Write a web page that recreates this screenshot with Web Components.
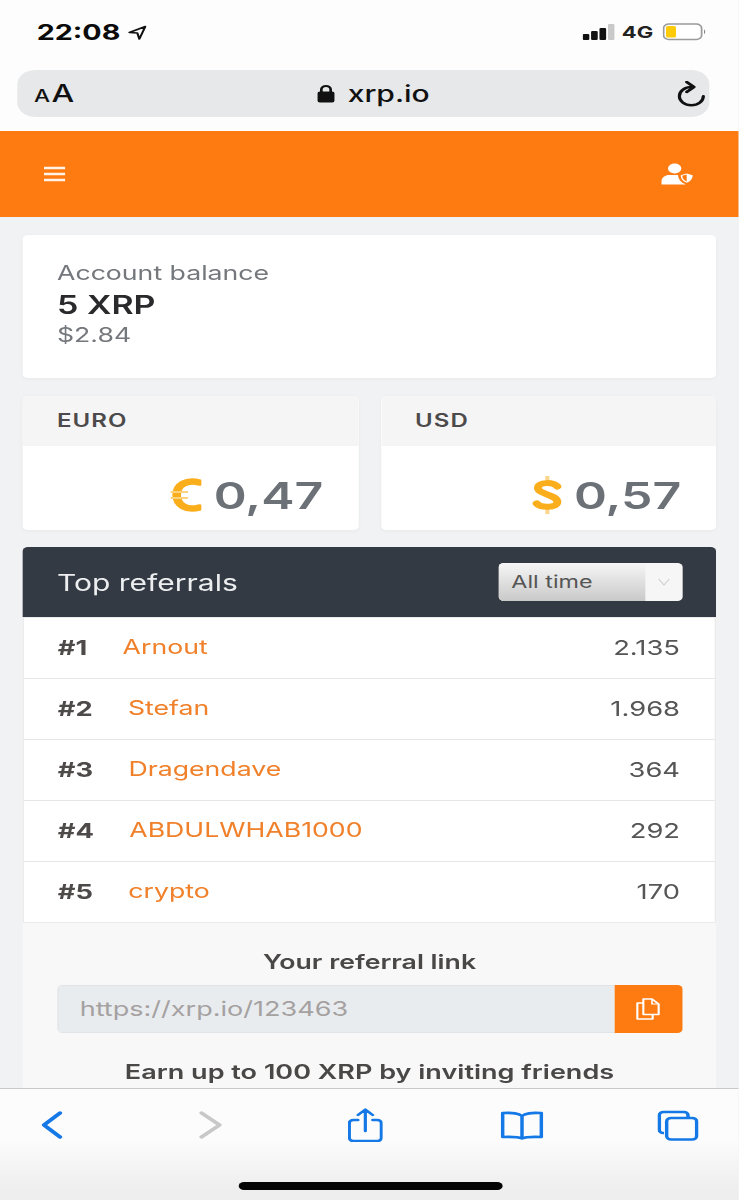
<!DOCTYPE html>
<html lang="en">
<head>
<meta charset="utf-8">
<title>xrp.io</title>
<style>
	html, body { margin: 0; height: 1200px; overflow: hidden; background: #f1f2f3; }
	body { font-family: Inter, "Liberation Sans", sans-serif; }
</style>
</head>
<body>
<phone-screen>
	<status-bar slot="top"></status-bar>
	<url-bar slot="top"></url-bar>
	<site-header slot="top"></site-header>

	<balance-card label="Account balance" amount="5 XRP" fiat="$2.84"></balance-card>
	<div class="currencies" style="display:flex;gap:17.25px;margin-top:18px">
		<currency-card label="EURO" value="0,47">
			<svg slot="icon" width="24" height="36" viewBox="0 0 24 36"><path d="M22.500 5.500C13 2 5.500 8 5.500 18S13 34 22.500 30.500" fill="none" stroke="#fbae1c" stroke-width="6.500" stroke-linecap="round"/><path d="M1 15h13M1 21h13" stroke="#fbd27e" stroke-width="2"/></svg>
		</currency-card>
		<currency-card label="USD" value="0,57">
			<svg slot="icon" width="23" height="40" viewBox="0 0 23 40"><path d="M11.500 1v5M11.500 34v5" stroke="#fcd48a" stroke-width="3"/><path d="M19 11.500C16 7 4.500 6.500 4.500 13c0 6.500 14.500 6.500 14.500 14 0 6-12.500 6-15.500 1.500" fill="none" stroke="#fbae1c" stroke-width="6" stroke-linecap="round"/></svg>
		</currency-card>
	</div>
	<referral-table title="Top referrals" period="All time">
		<referral-row rank="#1" name="Arnout" count="2.135"></referral-row>
		<referral-row rank="#2" name="Stefan" count="1.968"></referral-row>
		<referral-row rank="#3" name="Dragendave" count="364"></referral-row>
		<referral-row rank="#4" name="ABDULWHAB1000" count="292"></referral-row>
		<referral-row rank="#5" name="crypto" count="170"></referral-row>
	</referral-table>
	<referral-link url="https://xrp.io/123463"></referral-link>

	<safari-toolbar slot="bottom"></safari-toolbar>
</phone-screen>

<script>
// the reference is an iphone capture squeezed into 739px, so everything is laid out at 554px and stretched
class PhoneScreen extends HTMLElement {
	constructor(){
		super();
		this.attachShadow({mode:"open"});
		this.shadowRoot.innerHTML = /*html*/`
			<style>
				:host {
					display: flex;
					flex-direction: column;
					width: 554.25px;
					height: 1200px;
					transform: scaleX(1.33333);
					transform-origin: 0 0;
					overflow: hidden;
				}
				main {
					flex: 1;
					min-height: 0;
					overflow: hidden;
					padding: 18px 17.25px 0;
				}
			</style>
			<slot name="top"></slot>
			<main><slot></slot></main>
			<slot name="bottom"></slot>
		`;
	}
}
customElements.define("phone-screen",PhoneScreen);

class StatusBar extends HTMLElement {
	constructor(){
		super();
		this.attachShadow({mode:"open"});
		this.shadowRoot.innerHTML = /*html*/`
			<style>
				:host {
					display: flex;
					align-items: center;
					height: 70px;
					box-sizing: border-box;
					padding: 0 24.3px 6px 27.5px;
					background: #fdfdfd;
					color: #0b0b0b;
				}
				.time { font-size: 21.5px; font-weight: 700; margin-right: 6px; }
				.right { margin-left: auto; display: flex; align-items: center; }
				.net { font-size: 16.5px; font-weight: 700; margin: 0 7px 0 5.5px; color: #222; }
			</style>
			<span class="time">22:08</span>
			<svg width="14" height="15" viewBox="0 0 14 15"><path d="M13 1.500 1 7.500l6 .5 1.500 6z" fill="none" stroke="#111" stroke-width="1.600" stroke-linejoin="round"/></svg>
			<div class="right">
				<svg width="24" height="17" viewBox="0 0 24 17">
					<rect x="0" y="10" width="5" height="6" rx="1" fill="#111"/>
					<rect x="6.300" y="7" width="5" height="9" rx="1" fill="#111"/>
					<rect x="12.600" y="4" width="5" height="12" rx="1" fill="#111"/>
					<rect x="19" y="0" width="5" height="16" rx="1" fill="#c9c9c9"/>
				</svg>
				<span class="net">4G</span>
				<svg width="33" height="18" viewBox="0 0 33 18">
					<rect x=".7" y="1" width="28.500" height="15.500" rx="4" fill="#fff" stroke="#9a9a9a" stroke-width="1.300"/>
					<rect x="2.500" y="3" width="7.500" height="11.500" rx="1.500" fill="#fdcb0a"/>
					<path d="M31 6.500c1.200.5 1.200 4 0 4.500z" fill="#888"/>
				</svg>
			</div>
		`;
	}
}
customElements.define("status-bar",StatusBar);

class UrlBar extends HTMLElement {
	constructor(){
		super();
		this.attachShadow({mode:"open"});
		this.shadowRoot.innerHTML = /*html*/`
			<style>
				:host {
					display: block;
					background: #fdfdfd;
					padding: 0 22px 14px 12.750px;
				}
				.bar {
					position: relative;
					display: flex;
					align-items: center;
					justify-content: space-between;
					height: 47px;
					padding: 0 3px 0 12.750px;
					border-radius: 14px;
					background: #e7e8e9;
					color: #111;
				}
				.aa { font-size: 24px; font-weight: 500; line-height: 1; display: flex; align-items: baseline; }
				.aa small { font-size: 17px; margin-right: 1px; }
				.host {
					position: absolute;
					left: 225px;
					top: 0;
					bottom: 0;
					display: flex;
					align-items: center;
					gap: 10px;
					font-size: 22.5px;
					font-weight: 500;
				}
			</style>
			<div class="bar">
				<span class="aa"><small>A</small>A</span>
				<span class="host">
					<svg width="13" height="19" viewBox="0 0 13 19"><path d="M3 8V5.500a3.500 3.500 0 0 1 7 0V8" fill="none" stroke="#111" stroke-width="2"/><rect x="0" y="7.500" width="13" height="11" rx="2" fill="#111"/></svg>
					xrp.io
				</span>
				<svg width="21" height="26" viewBox="0 0 21 26"><path d="M11 6C5 6 1.500 10.500 1.500 15.300s4 9 9 9 9-4 9-9" fill="none" stroke="#111" stroke-width="2.400" stroke-linecap="round"/><path d="M7 1l5.500 5-5.500 5" fill="none" stroke="#111" stroke-width="2.400" stroke-linecap="round" stroke-linejoin="round"/></svg>
			</div>
		`;
	}
}
customElements.define("url-bar",UrlBar);

class SiteHeader extends HTMLElement {
	constructor(){
		super();
		this.attachShadow({mode:"open"});
		this.shadowRoot.innerHTML = /*html*/`
			<style>
				:host {
					display: flex;
					align-items: center;
					justify-content: space-between;
					height: 86px;
					padding: 0 33px 0 33px;
					background: #fd7b10;
				}
			</style>
			<svg width="16" height="16" viewBox="0 0 16 16"><path d="M0 2h16M0 8h16M0 14h16" stroke="#fff" stroke-opacity=".9" stroke-width="2.500"/></svg>
			<svg style="margin-right:-1px" width="26" height="22" viewBox="0 0 26 22">
				<circle cx="10" cy="5.500" r="5" fill="#fff"/>
				<path d="M0 21.500v-3c0-4 3-6.500 6-6.500h8c2 0 3 .5 4 1v8.500z" fill="#fff"/>
				<path d="M19 8.500l6.500 2.500c0 5-2 9-6.500 10.500-4.500-1.500-6.500-5.500-6.500-10.500z" fill="#fd7b10"/>
				<path d="M19 10.500l4.500 1.800c0 3.500-1.500 6.300-4.500 7.400-3-1.100-4.500-3.900-4.500-7.400z" fill="#fff"/>
				<path d="M19 11.500v7c-2-1-3.200-3-3.300-5.700z" fill="#fd7b10"/>
			</svg>
		`;
	}
}
customElements.define("site-header",SiteHeader);

class BalanceCard extends HTMLElement {
	constructor(){
		super();
		this.attachShadow({mode:"open"});
		this.shadowRoot.innerHTML = /*html*/`
			<style>
				:host {
					display: block;
					height: 143px;
					box-sizing: border-box;
					padding: 23px 25.500px;
					background: #fff;
					border-radius: 4px;
					box-shadow: 0 1px 4px #0000000a;
					line-height: 31px;
					font-size: 20px;
					color: #74787c;
				}
				.amount { font-size: 25.5px; font-weight: 600; color: #2a2a2c; }
			</style>
			<div>${this.getAttribute("label")}</div>
			<div class="amount">${this.getAttribute("amount")}</div>
			<div>${this.getAttribute("fiat")}</div>
		`;
	}
}
customElements.define("balance-card",BalanceCard);

class CurrencyCard extends HTMLElement {
	constructor(){
		super();
		this.attachShadow({mode:"open"});
		this.shadowRoot.innerHTML = /*html*/`
			<style>
				:host {
					display: block;
					flex: 1;
					height: 134px;
					background: #fff;
					border-radius: 4px;
					overflow: hidden;
					box-shadow: 0 1px 4px #0000000a;
				}
				.head {
					height: 50px;
					line-height: 50px;
					padding: 0 25.500px;
					background: #f5f5f5;
					font-size: 18px;
					font-weight: 600;
					letter-spacing: .8px;
					color: #4c4a4a;
				}
				.body {
					display: flex;
					align-items: center;
					justify-content: flex-end;
					gap: 9px;
					height: 84px;
					box-sizing: border-box;
					padding: 14px 26px 0;
					font-size: 37.5px;
					font-weight: 600;
					color: #6b7176;
				}
			</style>
			<div class="head">${this.getAttribute("label")}</div>
			<div class="body"><slot name="icon"></slot><span>${this.getAttribute("value")}</span></div>
		`;
	}
}
customElements.define("currency-card",CurrencyCard);

class ReferralTable extends HTMLElement {
	constructor(){
		super();
		this.attachShadow({mode:"open"});
		this.shadowRoot.innerHTML = /*html*/`
			<style>
				:host {
					display: block;
					margin-top: 17px;
				}
				.head {
					display: flex;
					align-items: center;
					justify-content: space-between;
					height: 70px;
					box-sizing: border-box;
					padding: 0 25.500px;
					background: #343a43;
					border-radius: 4px 4px 0 0;
					color: #eceef0;
					font-size: 22.500px;
				}
				.select {
					display: flex;
					width: 137.500px;
					height: 38px;
					border-radius: 4px;
					overflow: hidden;
					background: #f6f6f6;
					font-size: 17.500px;
					color: #555;
				}
				.value {
					flex: 1;
					padding-left: 9.500px;
					line-height: 37px;
					background: linear-gradient(#f6f6f6,#c9c9c9);
				}
				.arrow { width: 28px; display: flex; align-items: center; justify-content: center; }
				.rows {
					background: #fff;
					border: 1px solid #ebebeb;
					border-width: 1px 1px 0;
				}
			</style>
			<div class="head">
				<span>${this.getAttribute("title")}</span>
				<div class="select">
					<span class="value">${this.getAttribute("period")}</span>
					<span class="arrow"><svg width="10" height="10" viewBox="0 0 10 10"><path d="M1 2l4 6 4-6" fill="none" stroke="#d4d4d4" stroke-width="1"/></svg></span>
				</div>
			</div>
			<div class="rows"><slot></slot></div>
		`;
	}
}
customElements.define("referral-table",ReferralTable);

class ReferralRow extends HTMLElement {
	constructor(){
		super();
		this.attachShadow({mode:"open"});
		this.shadowRoot.innerHTML = /*html*/`
			<style>
				:host {
					display: flex;
					align-items: center;
					height: 61px;
					box-sizing: border-box;
					padding: 0 26px 2px 25px;
					border-bottom: 1px solid #e6e6e6;
					font-size: 20.500px;
					color: #565656;
				}
				:host(:last-child) { border-bottom-color: #ebebeb; }
				b { font-weight: 700; color: #4e4a4a; margin-right: 26.500px; }
				a { color: #f0802a; text-decoration: none; font-size: 20px; }
				.count { margin-left: auto; }
			</style>
			<b>${this.getAttribute("rank")}</b>
			<a href="#">${this.getAttribute("name")}</a>
			<span class="count">${this.getAttribute("count")}</span>
		`;
	}
}
customElements.define("referral-row",ReferralRow);

class ReferralLink extends HTMLElement {
	constructor(){
		super();
		this.attachShadow({mode:"open"});
		this.shadowRoot.innerHTML = /*html*/`
			<style>
				:host {
					display: block;
					height: 300px;
					box-sizing: border-box;
					padding: 24px 25.500px 0;
					background: #f8f8f8;
					text-align: center;
					font-size: 20.300px;
					font-weight: 600;
					line-height: 30px;
					color: #4a4747;
				}
				.title { font-size: 20px; }
				.group {
					display: flex;
					height: 48px;
					margin: 8px 0 24px;
					border-radius: 4px;
					overflow: hidden;
					text-align: left;
				}
				.input {
					flex: 1;
					padding-left: 16px;
					line-height: 46px;
					background: #e9ecef;
					border: 1px solid #e0e4e7;
					border-right: 0;
					font-weight: 400;
					color: #a5a1a1;
				}
				.copy {
					width: 50.250px;
					display: flex;
					align-items: center;
					justify-content: center;
					background: #fd7b10;
				}
			</style>
			<div class="title">Your referral link</div>
			<div class="group">
				<div class="input">${this.getAttribute("url")}</div>
				<div class="copy">
					<svg width="18" height="22" viewBox="0 0 18 22"><path d="M5.500 1H12l5 5v10.500H5.500z" fill="none" stroke="#fff" stroke-width="1.600" stroke-linejoin="round"/><path d="M5.500 5H1v16h11.500v-4.500" fill="none" stroke="#fff" stroke-width="1.600" stroke-linejoin="round"/><path d="M12 1v5h5" fill="none" stroke="#fff" stroke-width="1.200"/></svg>
				</div>
			</div>
			<div>Earn up to 100 XRP by inviting friends</div>
		`;
	}
}
customElements.define("referral-link",ReferralLink);

class SafariToolbar extends HTMLElement {
	constructor(){
		super();
		this.attachShadow({mode:"open"});
		this.shadowRoot.innerHTML = /*html*/`
			<style>
				:host {
					display: block;
					position: relative;
					height: 112px;
					box-sizing: border-box;
					border-top: 1px solid #c9c9c9;
					background: linear-gradient(#fcfcfc 45%,#eeeeee 90%);
				}
				.icons {
					display: grid;
					grid-template-columns: repeat(5,34px);
					justify-content: space-between;
					justify-items: center;
					align-items: center;
					height: 72px;
					padding: 0 28.750px 0 22px;
				}
				.home {
					position: absolute;
					left: 178.500px;
					top: 93px;
					width: 198px;
					height: 8px;
					border-radius: 4px;
					background: #050505;
				}
			</style>
			<div class="icons">
				<svg width="16" height="28" viewBox="0 0 16 28"><path d="M14 2 2 14 14 26" fill="none" stroke="#1478e6" stroke-width="3.200" stroke-linecap="round" stroke-linejoin="round"/></svg>
				<svg width="22" height="28" viewBox="0 0 22 28"><path d="M6.150 2 19.650 14 6.150 26" fill="none" stroke="#c8c8c8" stroke-width="3.200" stroke-linecap="round" stroke-linejoin="round"/></svg>
				<svg width="26" height="34" viewBox="0 0 26 34"><path d="M7.500 12H4a3 3 0 0 0-3 3v15a3 3 0 0 0 3 3h18a3 3 0 0 0 3-3V15a3 3 0 0 0-3-3h-3.500M13 23V2M7.500 7 13 1.500 18.500 7" fill="none" stroke="#1478e6" stroke-width="2.400" stroke-linecap="round" stroke-linejoin="round"/></svg>
				<svg width="33" height="29" viewBox="0 0 33 29"><path d="M16.500 5C14 2 10 1.500 2 2v24c8-.5 12 0 14.500 1.500C19 26 23 25.500 31 26V2C23 1.500 19 2 16.500 5zM16.500 5v22" fill="none" stroke="#1478e6" stroke-width="2.600" stroke-linejoin="round"/></svg>
				<svg width="31" height="31" viewBox="0 0 31 31"><path d="M5 23H4.500a3 3 0 0 1-3-3V5a3 3 0 0 1 3-3H20a3 3 0 0 1 3 3v2" fill="none" stroke="#1478e6" stroke-width="2.600"/><rect x="7" y="8" width="22.500" height="21.500" rx="3.500" fill="none" stroke="#1478e6" stroke-width="2.600"/></svg>
			</div>
			<div class="home"></div>
		`;
	}
}
customElements.define("safari-toolbar",SafariToolbar);
</script>
</body>
</html>
